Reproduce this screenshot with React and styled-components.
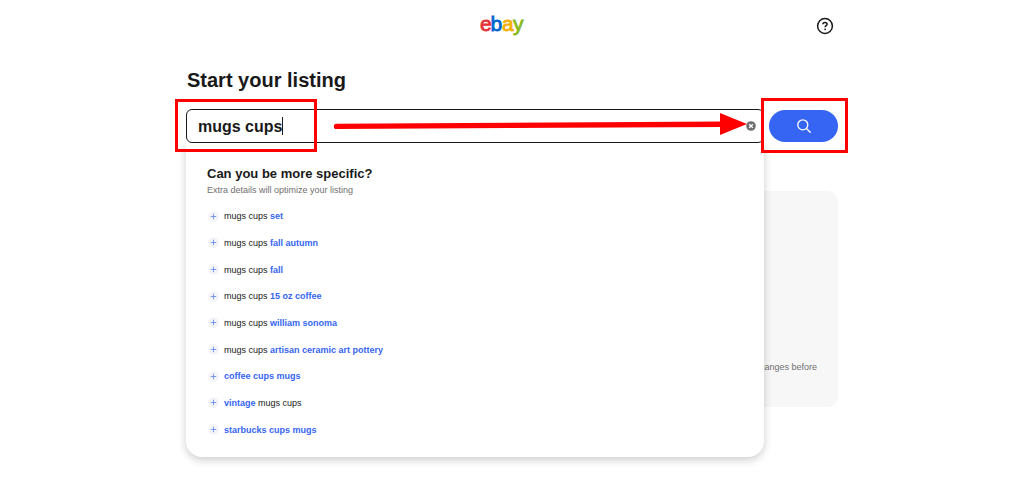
import React, { useState } from 'react';
import styled, { createGlobalStyle } from 'styled-components';

const GlobalStyle = createGlobalStyle`
  * {
    box-sizing: border-box;
  }

  body {
    margin: 0;
    background: #fff;
    color: #191919;
    font-family: 'Liberation Sans', Arial, sans-serif;
  }
`;

const Page = styled.div`
  max-width: 652px;
  min-height: 100vh;
  margin: 0 auto;
`;

const Header = styled.header`
  display: grid;
  grid-template-columns: 1fr auto 1fr;
  align-items: center;
  padding-top: 13px;
`;

const LogoLink = styled.a`
  grid-column: 2;
  display: block;
  height: 26px;
  margin-right: 18px;
`;

const HelpButton = styled.button`
  justify-self: end;
  display: flex;
  margin-right: 4px;
  padding: 0;
  border: 0;
  background: none;
  color: #191919;
`;

const Title = styled.h1`
  margin: 0;
  padding: 29px 0 17px 1px;
  font-size: 20px;
  line-height: 24px;
`;

const SearchRow = styled.form`
  position: relative;
  display: flex;
  align-items: center;
  gap: 5px;
`;

const SearchField = styled.div`
  position: relative;
  flex: 1;
  display: flex;
`;

const SearchInput = styled.input`
  position: relative;
  z-index: 2;
  flex: 1;
  min-width: 0;
  height: 34px;
  padding: 1px 32px 0 11px;
  border: 1px solid #191919;
  border-radius: 6px;
  outline: 0;
  background: #fff;
  color: #191919;
  font: bold 16px 'Liberation Sans', Arial, sans-serif;
`;

const Caret = styled.span`
  position: absolute;
  z-index: 3;
  top: 8px;
  left: 96px;
  width: 1px;
  height: 18px;
  background: #191919;
`;

const ClearButton = styled.button`
  position: absolute;
  z-index: 3;
  top: 12px;
  right: 8px;
  display: flex;
  padding: 0;
  border: 0;
  background: none;
`;

const SearchButton = styled.button`
  display: flex;
  align-items: center;
  justify-content: center;
  width: 69px;
  height: 32px;
  border: 0;
  border-radius: 16px;
  background: #3665f3;
  color: #fff;
`;

const Suggestions = styled.section`
  position: absolute;
  z-index: 1;
  top: 34px;
  left: 0;
  right: 0;
  padding: 22px 21px 14px;
  border-radius: 0 0 16px 16px;
  background: #fff;
  box-shadow: 0 3px 9px rgba(0, 0, 0, 0.2);
`;

const SuggestionsTitle = styled.h2`
  margin: 0;
  font-size: 13px;
  line-height: 18px;
`;

const SuggestionsHint = styled.p`
  margin: 0;
  color: #707070;
  font-size: 9px;
  line-height: 14px;
`;

const SuggestionList = styled.ul`
  display: grid;
  grid-auto-rows: 1fr;
  min-height: 240px;
  margin: 6px 0 0;
  padding: 0;
  list-style: none;
`;

const Suggestion = styled.button`
  display: flex;
  align-items: center;
  gap: 5px;
  height: 100%;
  padding: 0 0 0 1px;
  border: 0;
  background: none;
  color: #191919;
  font: 9px 'Liberation Sans', Arial, sans-serif;
  white-space: pre;

  b {
    color: #3665f3;
  }
`;

const PlusBadge = styled.span`
  display: flex;
  align-items: center;
  justify-content: center;
  width: 11px;
  height: 11px;
  border-radius: 50%;
  background: #f4f5f8;
`;

const Intro = styled.section`
  display: flex;
  align-items: flex-end;
  justify-content: flex-end;
  min-height: 216px;
  margin-top: 48px;
  padding: 0 21px 34px;
  border-radius: 11px;
  background: #f7f7f7;

  p {
    margin: 0;
    color: #707070;
    font-size: 9px;
    line-height: 12px;
  }
`;

const Highlight = styled.div`
  position: absolute;
  z-index: 4;
  top: ${({ $top }) => $top}px;
  left: ${({ $left }) => $left};
  right: ${({ $right }) => $right};
  width: ${({ $width }) => $width}px;
  height: ${({ $height }) => $height}px;
  border: 3px solid #fe0000;
  pointer-events: none;
`;

const Arrow = styled.svg`
  position: absolute;
  z-index: 4;
  top: 2px;
  right: 91px;
  pointer-events: none;
`;

const suggestions = [
  ['mugs cups ', 'set'],
  ['mugs cups ', 'fall autumn'],
  ['mugs cups ', 'fall'],
  ['mugs cups ', '15 oz coffee'],
  ['mugs cups ', 'william sonoma'],
  ['mugs cups ', 'artisan ceramic art pottery'],
  ['', 'coffee cups mugs'],
  ['', 'vintage', ' mugs cups'],
  ['', 'starbucks cups mugs'],
];

function Logo() {
  return (
    <svg
      width="46"
      height="26"
      viewBox="0 0 46 26"
      overflow="visible"
      fontFamily="Liberation Sans, Arial, sans-serif"
      fontSize="21"
      strokeWidth="0.8"
    >
      <text x="0" y="18" fill="#e53238" stroke="#e53238">e</text>
      <text x="10.5" y="18" fill="#0064d2" stroke="#0064d2">b</text>
      <text x="22" y="18" fill="#f5af02" stroke="#f5af02">a</text>
      <text x="33" y="18" fill="#86b817" stroke="#86b817">y</text>
    </svg>
  );
}

function HelpIcon() {
  return (
    <svg width="18" height="18" viewBox="0 0 18 18" fill="none" stroke="currentColor">
      <circle cx="9" cy="9" r="7.4" strokeWidth="1.5" />
      <path d="M6.9 7.3c0-1.2.9-1.9 2.1-1.9s2.1.7 2.1 1.8c0 1.4-2 1.4-2 3" strokeWidth="1.5" />
      <circle cx="9.1" cy="12.3" r="0.9" fill="currentColor" stroke="none" />
    </svg>
  );
}

function SearchIcon() {
  return (
    <svg width="14" height="14" viewBox="0 0 14 14" fill="none" stroke="currentColor" strokeLinecap="round">
      <circle cx="5.8" cy="5.8" r="5" strokeWidth="1.3" />
      <path d="M9.5 9.5l3.7 3.7" strokeWidth="1.4" />
    </svg>
  );
}

function ClearIcon() {
  return (
    <svg width="10" height="10" viewBox="0 0 10 10">
      <circle cx="5" cy="5" r="4.8" fill="#707070" />
      <path d="M3.2 3.2l3.6 3.6M6.8 3.2L3.2 6.8" stroke="#fff" strokeWidth="1.3" />
    </svg>
  );
}

function PlusIcon() {
  return (
    <svg width="7" height="7" viewBox="0 0 7 7">
      <path d="M3.5 0.7v5.6M0.7 3.5h5.6" stroke="#6e8ff2" strokeWidth="0.9" />
    </svg>
  );
}

function App() {
  const [query, setQuery] = useState('mugs cups');

  return (
    <>
      <GlobalStyle />
      <Page>
        <Header>
          <LogoLink href="#" aria-label="ebay">
            <Logo />
          </LogoLink>
          <HelpButton type="button" aria-label="Help">
            <HelpIcon />
          </HelpButton>
        </Header>
        <main>
          <Title>Start your listing</Title>
          <SearchRow onSubmit={e => e.preventDefault()}>
            <SearchField>
              <SearchInput
                type="text"
                aria-label="Start your listing"
                value={query}
                onChange={e => setQuery(e.target.value)}
              />
              <Caret />
              <ClearButton type="button" aria-label="Clear" onClick={() => setQuery('')}>
                <ClearIcon />
              </ClearButton>
              <Suggestions>
                <SuggestionsTitle>Can you be more specific?</SuggestionsTitle>
                <SuggestionsHint>Extra details will optimize your listing</SuggestionsHint>
                <SuggestionList>
                  {suggestions.map(([before, match, after]) => (
                    <li key={before + match}>
                      <Suggestion type="button" onClick={() => setQuery(before + match + (after || ''))}>
                        <PlusBadge>
                          <PlusIcon />
                        </PlusBadge>
                        <span>
                          {before}
                          <b>{match}</b>
                          {after}
                        </span>
                      </Suggestion>
                    </li>
                  ))}
                </SuggestionList>
              </Suggestions>
            </SearchField>
            <SearchButton type="submit" aria-label="Search">
              <SearchIcon />
            </SearchButton>
            <Highlight $top={-10} $left="-11px" $width={142} $height={53} />
            <Highlight $top={-11} $right="-10px" $width={87} $height={55} />
            <Arrow width="414" height="26" viewBox="0 0 414 26">
              <path d="M3.5 15.4L390 13.2" stroke="#fe0000" strokeWidth="5.4" strokeLinecap="round" />
              <path d="M387 2v22l27-11z" fill="#fe0000" />
            </Arrow>
          </SearchRow>
          <Intro>
            <p>changes before</p>
          </Intro>
        </main>
      </Page>
    </>
  );
}

export default App;
